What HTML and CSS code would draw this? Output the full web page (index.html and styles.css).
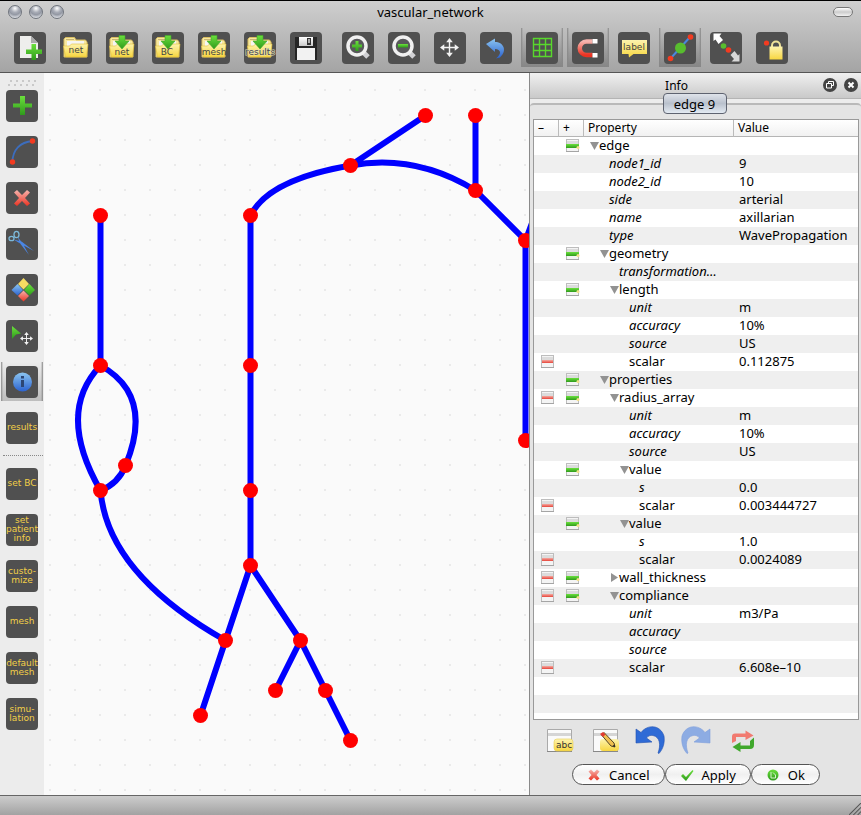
FILE: index.html
```html
<!DOCTYPE html>
<html lang="en">
<head>
<meta charset="utf-8">
<title>vascular_network</title>
<link rel="stylesheet" href="styles.css">
</head>
<body>
<svg class="defs" aria-hidden="true">
  <defs>
    <linearGradient id="green" x1="0" y1="0" x2="0" y2="1"><stop offset="0" stop-color="#6be03c"/><stop offset="1" stop-color="#2f9a1c"/></linearGradient>
    <linearGradient id="red" x1="0" y1="0" x2="0" y2="1"><stop offset="0" stop-color="#f6b4ae"/><stop offset="1" stop-color="#ea3322"/></linearGradient>
    <linearGradient id="yellow" x1="0" y1="0" x2="0" y2="1"><stop offset="0" stop-color="#fdf3ae"/><stop offset="1" stop-color="#f7d640"/></linearGradient>
    <linearGradient id="blue" x1="0" y1="0" x2="0" y2="1"><stop offset="0" stop-color="#8cc6f2"/><stop offset="1" stop-color="#2b62cf"/></linearGradient>
    <linearGradient id="silver" x1="0" y1="0" x2="0" y2="1"><stop offset="0" stop-color="#ffffff"/><stop offset="1" stop-color="#c9c9c9"/></linearGradient>
    <linearGradient id="redbar" x1="0" y1="0" x2="0" y2="1"><stop offset="0" stop-color="#f5aaa2"/><stop offset="1" stop-color="#e6453a"/></linearGradient>
    <symbol id="minus" viewBox="0 0 14 13"><rect x=".5" y=".5" width="12" height="12" fill="#f4f4f4" stroke="#bdbdbd"/><path d="M1 2h11v3H1z" fill="#dcdcdc"/><path d="M1 5h11v3H1z" fill="url(#redbar)"/><path d="M0 12.5h13" stroke="#a5a5a5"/></symbol>
    <symbol id="plus" viewBox="0 0 14 13"><rect x=".5" y=".5" width="12" height="12" fill="#f4f4f4" stroke="#bdbdbd"/><path d="M1 2h11v3H1z" fill="#dcdcdc"/><path d="M0 5h13v4H0z" fill="url(#green)"/><circle cx="12" cy="8.500" r="1.500" fill="#f4e08a"/><path d="M0 12.500h13" stroke="#a5a5a5"/></symbol>
    <symbol id="open" viewBox="0 0 9 9"><path d="M0 1h9L4.500 9z" fill="#929292"/></symbol>
    <symbol id="shut" viewBox="0 0 9 9"><path d="M1 0v9l7-4.500z" fill="#929292"/></symbol>
    <symbol id="folder" viewBox="0 0 32 32"><path d="M4 25V7l1.500-1.500h9L16 8h9.500L27 10v15z" fill="#f7e8a0" stroke="#d8bd61"/><path d="M7 9h17v7H7z" fill="#f5f5f2"/><path d="M6 7.500h8" stroke="#c9b674"/><path d="M3.500 14h6l2-2h16.500l-1.500 13H5.500z" fill="url(#yellow)" stroke="#e2bf38" stroke-width=".6"/></symbol>
    <symbol id="down" viewBox="0 0 32 32"><path d="M13 3.500h6V9h4l-7 8-7-8h4z" fill="url(#green)" stroke="#43a82b" stroke-width=".6"/></symbol>
    <symbol id="move" viewBox="0 0 20 20"><path d="M10 2v16M2 10h16" stroke="#f2f2f2" stroke-width="1.500"/><path d="M10 0l3.500 4.500h-7zM10 20l3.500-4.500h-7zM0 10l4.500-3.500v7zM20 10l-4.500-3.500v7z" fill="#f2f2f2"/></symbol>
    <pattern id="dots" width="25" height="25" patternUnits="userSpaceOnUse" x="49" y="89"><rect width="2" height="2" fill="#eaeaea"/></pattern>
  </defs>
</svg>
<div class="window">
  <header class="chrome">
    <div class="titlebar">
      <div class="lights"><button aria-label="Close"></button><button aria-label="Minimize"></button><button aria-label="Zoom"></button></div>
      <h1>vascular_network</h1>
      <button class="pill" aria-label="Toggle toolbar"></button>
    </div>
    <div class="toolbar">
      <button class="tool" aria-label="New"><svg viewBox="0 0 32 32"><path d="M6 4h11l7 7v15H6z" fill="#eeeeec"/><path d="M17 4v7h7z" fill="#aaa"/><path d="M17.500 12h4.500v5.500h6V22h-6v6h-4.500v-6H12v-4.500h5.500z" fill="url(#green)"/></svg></button>
      <button class="tool"><svg viewBox="0 0 32 32"><use href="#folder"/><text x="16" y="21">net</text></svg></button>
      <button class="tool"><svg viewBox="0 0 32 32"><use href="#folder"/><use href="#down"/><text x="16" y="23">net</text></svg></button>
      <button class="tool"><svg viewBox="0 0 32 32"><use href="#folder"/><use href="#down"/><text x="15" y="23">BC</text></svg></button>
      <button class="tool"><svg viewBox="0 0 32 32"><use href="#folder"/><use href="#down"/><text x="16" y="23">mesh</text></svg></button>
      <button class="tool"><svg viewBox="0 0 32 32"><use href="#folder"/><use href="#down"/><text class="halo" x="16" y="23">results</text></svg></button>
      <button class="tool spaced" aria-label="Save"><svg viewBox="0 0 32 32"><path d="M5 5h22v23H5z" fill="#252525"/><path d="M9 5h14v9H9z" fill="url(#silver)"/><path d="M17 6h4v7h-4z" fill="#333"/><path d="M18 7h2v4h-2z" fill="#aaa"/><path d="M7 16h18v12H7z" fill="#f2f2f2"/></svg></button>
      <button class="tool" aria-label="Zoom in"><svg viewBox="0 0 32 32"><path d="M21 20l5 5" stroke="#d0d0d3" stroke-width="5"/><circle cx="15" cy="14" r="9" fill="#58585a" stroke="#f0f0f0" stroke-width="3.500"/><path d="M13.500 9h3v3.500H20v3h-3.500V19h-3v-3.500H10v-3h3.500z" fill="url(#green)"/></svg></button>
      <button class="tool" aria-label="Zoom out"><svg viewBox="0 0 32 32"><path d="M21 20l5 5" stroke="#d0d0d3" stroke-width="5"/><circle cx="15" cy="14" r="9" fill="#58585a" stroke="#f0f0f0" stroke-width="3.500"/><path d="M10 12h10v3.500H10z" fill="url(#green)"/></svg></button>
      <button class="tool" aria-label="Pan"><svg viewBox="0 0 32 32"><use href="#move" x="6" y="6" width="19" height="19"/></svg></button>
      <button class="tool" aria-label="Undo"><svg viewBox="0 0 32 32"><path d="M6 12l9-5.500v3.500c8 0 13 8 5 15.500l-4 1c6-5 5-9-1-9.500V20z" fill="url(#blue)"/></svg></button>
      <button class="tool on" aria-label="Grid"><svg viewBox="0 0 32 32"><path d="M7.500 6.500h18v18h-18zM7.500 12.500h18M7.500 18.500h18M13.500 6.500v18M19.500 6.500v18" fill="none" stroke="#58d82c" stroke-width="1.400"/></svg></button>
      <button class="tool on" aria-label="Snap"><svg viewBox="0 0 32 32"><path d="M20.500 9.500h-6a6.500 6.500 0 0 0 0 13.500h6" fill="none" stroke="url(#red)" stroke-width="4.500"/><path d="M20.500 7h5v4.500h-5zM20.500 21h5v4.500h-5z" fill="#fff"/></svg></button>
      <button class="tool"><svg viewBox="0 0 32 32"><path d="M4 8h25v14H15.500L11 25.500 10.500 22H4z" fill="url(#yellow)"/><text x="16" y="18">label</text></svg></button>
      <button class="tool on" aria-label="Show nodes"><svg viewBox="0 0 32 32"><path d="M6.500 26.500l20-22" stroke="#4a86dd" stroke-width="2"/><circle cx="6.500" cy="26.500" r="2.800" fill="#f33b20"/><circle cx="26.500" cy="5" r="2.800" fill="#f33b20"/><circle cx="16.500" cy="16" r="5.500" fill="#58bd2e"/></svg></button>
      <button class="tool" aria-label="Stretch"><svg viewBox="0 0 32 32"><path d="M3.500 1.500h8L9.500 4l3.500 4-4.500 4L5.500 7.500l-2 1.500z" fill="#fff"/><path d="M29.500 29.500h-8l2.500-2.500-3.500-4 4-4 3.500 4.500 1.500-1.500z" fill="#d8d8d8"/><circle cx="13.500" cy="14" r="2.800" fill="#58bd2e"/><circle cx="18.500" cy="18" r="2.800" fill="#f33b20"/></svg></button>
      <button class="tool" aria-label="Lock"><svg viewBox="0 0 32 32"><circle cx="10.500" cy="11" r="2.600" fill="#f33b20"/><path d="M16 16v-2.500a4 4 0 0 1 8 0V16" fill="none" stroke="#efe39a" stroke-width="2"/><path d="M13.500 14.500h13v13h-13z" fill="url(#yellow)"/></svg></button>
    </div>
  </header>
  <main class="work">
    <nav class="side">
      <svg class="grip" viewBox="0 0 30 6"><path d="M2 1h28M0 5h30" stroke="#c9c9c9" stroke-width="2" stroke-dasharray="2 4"/></svg>
      <button class="tool" aria-label="Add"><svg viewBox="0 0 32 32"><path d="M14 6h5v7.500h7v4h-7V25h-5v-7.500H7v-4h7z" fill="url(#green)"/></svg></button>
      <button class="tool" aria-label="Curve"><svg viewBox="0 0 32 32"><path d="M6.500 26C6.500 14 14 6 26.500 5" fill="none" stroke="#3c6dbd" stroke-width="1.800"/><circle cx="6.500" cy="26" r="2.700" fill="#f33b20"/><circle cx="26.500" cy="5" r="2.700" fill="#f33b20"/></svg></button>
      <button class="tool" aria-label="Delete"><svg viewBox="0 0 32 32"><path d="M8 10.500L11 8l5 5 5-5 3 2.500-5 5.500 5 5.500-3 2.500-5-5-5 5-3-2.500 5-5.500z" fill="url(#red)"/></svg></button>
      <button class="tool" aria-label="Cut"><svg viewBox="0 0 32 32"><ellipse cx="5.500" cy="10.500" rx="2.500" ry="2.200" fill="none" stroke="#7cb8d8" stroke-width="1.300"/><ellipse cx="10.500" cy="6.500" rx="2.500" ry="3.200" fill="none" stroke="#7cb8d8" stroke-width="1.300"/><path d="M7.500 11.500l8 2 12.500 9.500-13-7zM11.500 9l5 6 6.500 12-8.500-11z" fill="#4a86e4"/></svg></button>
      <button class="tool" aria-label="Tiles"><svg viewBox="0 0 32 32"><path d="M17.500 4l5.500 6-5.500 5.500L12 10z" fill="#f6dc62"/><path d="M11.500 10l5.500 6-5.500 5.500L5.500 16z" fill="url(#blue)"/><path d="M23.500 10l5.500 6-5.500 5.500L18 16z" fill="url(#green)"/><path d="M17.500 16.500L23 22l-5.500 5.500L12 22z" fill="url(#red)"/></svg></button>
      <button class="tool" aria-label="Move"><svg viewBox="0 0 32 32"><path d="M6 6l9 7.500-5 1L6 19z" fill="url(#green)"/><use href="#move" x="14" y="12" width="13" height="13"/></svg></button>
      <button class="tool on" aria-label="Info"><svg viewBox="0 0 32 32"><circle cx="16.500" cy="16" r="9.500" fill="url(#blue)"/><path d="M15 14h3v7h-3zM15 10h3v2.500h-3z" fill="#2c4674"/></svg></button>
      <button class="tool"><span>results</span></button>
      <hr>
      <button class="tool"><span>set BC</span></button>
      <button class="tool"><span>set<br>patient<br>info</span></button>
      <button class="tool"><span>custo-<br>mize</span></button>
      <button class="tool"><span>mesh</span></button>
      <button class="tool"><span>default<br>mesh</span></button>
      <button class="tool"><span>simu-<br>lation</span></button>
    </nav>
    <section class="canvas">
      <svg width="100%" height="100%">
        <g transform="translate(-44 -73)">
          <rect x="44" y="73" width="4000" height="4000" fill="url(#dots)"/>
          <g class="edges" transform="translate(.5 .5)">
            <path d="M100 215V365Q55 412 100 490Q107 573 225 640M100 365Q154 395 125 465Q118 483 100 490"/>
            <path d="M250 565V215Q268 179 350 165L425 115M350 165Q415 153 475 190V115M475 190L525 240V440M525 240L540 200"/>
            <path d="M250 565L200 715M250 565L300 640L275 690M300 640L325 690L350 740"/>
          </g>
          <g class="nodes" transform="translate(.5 .5)">
            <circle cx="100" cy="215" r="7.500"/><circle cx="100" cy="365" r="7.500"/><circle cx="125" cy="465" r="7.500"/><circle cx="100" cy="490" r="7.500"/>
            <circle cx="250" cy="215" r="7.500"/><circle cx="250" cy="365" r="7.500"/><circle cx="250" cy="490" r="7.500"/><circle cx="250" cy="565" r="7.500"/>
            <circle cx="350" cy="165" r="7.500"/><circle cx="425" cy="115" r="7.500"/><circle cx="475" cy="115" r="7.500"/><circle cx="475" cy="190" r="7.500"/>
            <circle cx="525" cy="240" r="7.500"/><circle cx="525" cy="440" r="7.500"/><circle cx="225" cy="640" r="7.500"/><circle cx="200" cy="715" r="7.500"/>
            <circle cx="300" cy="640" r="7.500"/><circle cx="275" cy="690" r="7.500"/><circle cx="325" cy="690" r="7.500"/><circle cx="350" cy="740" r="7.500"/>
          </g>
        </g>
      </svg>
    </section>
    <aside class="dock">
      <div class="dock-title">
        <h2>Info</h2>
        <div class="dock-buttons">
          <button aria-label="Float"><svg viewBox="0 0 14 14"><circle cx="7" cy="7" r="7" fill="#444"/><path d="M5.500 5.500v-2h5v4h-2M3.500 5.500h5v4.500h-5z" fill="none" stroke="#fff"/></svg></button>
          <button aria-label="Close"><svg viewBox="0 0 14 14"><circle cx="7" cy="7" r="7" fill="#444"/><path d="M4.500 4.500l5 5M9.500 4.500l-5 5" stroke="#fff" stroke-width="2"/></svg></button>
        </div>
      </div>
      <div class="tabs"><button class="tab">edge 9</button></div>
      <div class="panel">
        <div class="tree">
          <table>
            <colgroup><col class="c-minus"><col class="c-plus"><col class="c-name"><col></colgroup>
            <thead><tr><th>–</th><th>+</th><th>Property</th><th>Value</th></tr></thead>
            <tbody>
              <tr><td></td><td><svg class="mark"><use href="#plus"/></svg></td><td class="l0"><svg class="tri"><use href="#open"/></svg>edge</td><td></td></tr>
              <tr><td></td><td></td><td class="l1 attr">node1_id</td><td>9</td></tr>
              <tr><td></td><td></td><td class="l1 attr">node2_id</td><td>10</td></tr>
              <tr><td></td><td></td><td class="l1 attr">side</td><td>arterial</td></tr>
              <tr><td></td><td></td><td class="l1 attr">name</td><td>axillarian</td></tr>
              <tr><td></td><td></td><td class="l1 attr">type</td><td>WavePropagation</td></tr>
              <tr><td></td><td><svg class="mark"><use href="#plus"/></svg></td><td class="l1"><svg class="tri"><use href="#open"/></svg>geometry</td><td></td></tr>
              <tr><td></td><td></td><td class="l2 attr">transformation…</td><td></td></tr>
              <tr><td></td><td><svg class="mark"><use href="#plus"/></svg></td><td class="l2"><svg class="tri"><use href="#open"/></svg>length</td><td></td></tr>
              <tr><td></td><td></td><td class="l3 attr">unit</td><td>m</td></tr>
              <tr><td></td><td></td><td class="l3 attr">accuracy</td><td>10%</td></tr>
              <tr><td></td><td></td><td class="l3 attr">source</td><td>US</td></tr>
              <tr><td><svg class="mark"><use href="#minus"/></svg></td><td></td><td class="l3">scalar</td><td>0.112875</td></tr>
              <tr><td></td><td><svg class="mark"><use href="#plus"/></svg></td><td class="l1"><svg class="tri"><use href="#open"/></svg>properties</td><td></td></tr>
              <tr><td><svg class="mark"><use href="#minus"/></svg></td><td><svg class="mark"><use href="#plus"/></svg></td><td class="l2"><svg class="tri"><use href="#open"/></svg>radius_array</td><td></td></tr>
              <tr><td></td><td></td><td class="l3 attr">unit</td><td>m</td></tr>
              <tr><td></td><td></td><td class="l3 attr">accuracy</td><td>10%</td></tr>
              <tr><td></td><td></td><td class="l3 attr">source</td><td>US</td></tr>
              <tr><td></td><td><svg class="mark"><use href="#plus"/></svg></td><td class="l3"><svg class="tri"><use href="#open"/></svg>value</td><td></td></tr>
              <tr><td></td><td></td><td class="l4 attr">s</td><td>0.0</td></tr>
              <tr><td><svg class="mark"><use href="#minus"/></svg></td><td></td><td class="l4">scalar</td><td>0.003444727</td></tr>
              <tr><td></td><td><svg class="mark"><use href="#plus"/></svg></td><td class="l3"><svg class="tri"><use href="#open"/></svg>value</td><td></td></tr>
              <tr><td></td><td></td><td class="l4 attr">s</td><td>1.0</td></tr>
              <tr><td><svg class="mark"><use href="#minus"/></svg></td><td></td><td class="l4">scalar</td><td>0.0024089</td></tr>
              <tr><td><svg class="mark"><use href="#minus"/></svg></td><td><svg class="mark"><use href="#plus"/></svg></td><td class="l2"><svg class="tri"><use href="#shut"/></svg>wall_thickness</td><td></td></tr>
              <tr><td><svg class="mark"><use href="#minus"/></svg></td><td><svg class="mark"><use href="#plus"/></svg></td><td class="l2"><svg class="tri"><use href="#open"/></svg>compliance</td><td></td></tr>
              <tr><td></td><td></td><td class="l3 attr">unit</td><td>m3/Pa</td></tr>
              <tr><td></td><td></td><td class="l3 attr">accuracy</td><td></td></tr>
              <tr><td></td><td></td><td class="l3 attr">source</td><td></td></tr>
              <tr><td><svg class="mark"><use href="#minus"/></svg></td><td></td><td class="l3">scalar</td><td>6.608e–10</td></tr>
            </tbody>
          </table>
        </div>
        <div class="actions">
          <button><svg viewBox="0 0 30 30"><path d="M2.500 4.500h24v22h-24z" fill="#fafafa" stroke="#aaa"/><path d="M3 8h23v3H3z" fill="#d5d5d5"/><path d="M2 26.500h25" stroke="#888"/><rect x="9" y="14" width="19" height="12" rx="3" fill="url(#yellow)" stroke="#e8cf55" stroke-width=".6"/><text class="abc" x="19" y="23">abc</text></svg></button>
          <button aria-label="Edit"><svg viewBox="0 0 30 30"><path d="M2.500 4.500h24v22h-24z" fill="#fafafa" stroke="#aaa"/><path d="M3 8h23v3H3z" fill="#d5d5d5"/><path d="M2 26.500h25" stroke="#888"/><rect x="9" y="14" width="19" height="12" rx="3" fill="url(#yellow)"/><path d="M10.500 10l2.500-2.500L23 18l1 4-4-1z" fill="#f0c050" stroke="#554627"/><path d="M9 9l3-2 2.500 2.500-2.500 2.500z" fill="#e23a32"/><path d="M21.500 21l2.500 1-.500-2.500z" fill="#222"/></svg></button>
          <button aria-label="Undo"><svg viewBox="2 0 30 30"><path d="M1 4l5 3.500C12-.500 25-1 29 11c1 7-1 13-5 17.500l-1-.5c3-8 2-16-5-17.500-3-.5-5 .5-6.500 2.500L17 17l-16 1z" fill="#2f6bd6" stroke="#1f4fb0" stroke-width=".6"/></svg></button>
          <button aria-label="Redo"><svg viewBox="2 0 30 30"><path d="M29 4l-5 3.500C18-.500 5-1 1 11c-1 7 1 13 5 17.500l1-.5c-3-8-2-16 5-17.500 3-.5 5 .5 6.500 2.500L13 17l16 1z" fill="#8dace3" stroke="#7d9edb" stroke-width=".6"/></svg></button>
          <button aria-label="Refresh"><svg viewBox="1 0 30 30"><path d="M4 18V11.500Q4 8.500 7 8.500h10.500V5.500L25.500 10.500l-8 4.500v-3H8v4z" fill="#f17a70"/><path d="M26 12.500V20q0 4-4 4h-9.500v3L4.500 22l8-5v3.500H22V16z" fill="#40a82c"/></svg></button>
        </div>
        <div class="dialog">
          <button><svg viewBox="0 0 14 14"><path d="M1.500 3.500L4 1.500l3 3 3-3 2.500 2-3 3.500 3 3.500-2.500 2-3-3-3 3-2.500-2 3-3.500z" fill="url(#red)"/></svg>Cancel</button>
          <button><svg viewBox="0 0 14 14"><path d="M1 8l2-2 3 3 6.500-7L13.500 3 6 13z" fill="url(#green)"/></svg>Apply</button>
          <button><svg viewBox="0 0 14 14"><circle cx="7" cy="7" r="5.500" fill="url(#green)"/><path d="M5 4v6h4.500V7L7 4.500" fill="none" stroke="#d8f0cf"/></svg>Ok</button>
        </div>
      </div>
    </aside>
  </main>
  <footer class="status"><svg viewBox="0 0 14 14"><path d="M0 14L14 0M5 14L14 5M10 14L14 10" stroke="#555" stroke-width="1.200"/></svg></footer>
</div>
</body>
</html>
```
FILE: styles.css
```css
* { box-sizing: border-box; }
body { margin: 0; font: 13px/18px "Noto Sans", "Open Sans", sans-serif; color: #000; }
button { font: inherit; color: inherit; padding: 0; border: 0; background: none; }
h1, h2 { margin: 0; font-size: 13px; font-weight: 400; }
.defs { position: absolute; width: 0; height: 0; }

.window { display: flex; flex-direction: column; height: 100vh; overflow: hidden; border-top: 1px solid #000; background: #ececec; }
.chrome { flex: none; border-bottom: 1px solid #555; background: linear-gradient(#cfcfcf, #a4a4a4); }
.titlebar { display: flex; align-items: center; justify-content: space-between; height: 22px; padding: 0 8px; }
.titlebar h1 { flex: 1; text-align: center; padding-right: 36px; }
.lights { display: flex; gap: 7px; }
.lights button { width: 14px; height: 14px; border: 1px solid #70757d; border-radius: 50%; background: radial-gradient(circle at 50% 20%, #fff 0, #a9adb7 35%, #9398a3 55%, #eceef2 90%); }
.pill { width: 20px; height: 10px; border: 1px solid #777; border-radius: 5px; background: linear-gradient(#fff, #ccc 50%, #f2f2f2); }
.toolbar { display: flex; gap: 4px; padding: 5px 9px; }

.tool { flex: none; display: flex; align-items: center; justify-content: center; width: 42px; height: 39px; }
.tool > svg, .tool > span { width: 32px; height: 32px; border-radius: 4px; background: #505050; }
.tool > svg { display: block; overflow: visible; }
.tool.on { background: linear-gradient(90deg, #888, transparent 5%, transparent 95%, #888), linear-gradient(rgba(0, 0, 0, 0), rgba(0, 0, 0, 0.2)); }
.tool text { font: 9px "DejaVu Sans", sans-serif; text-anchor: middle; fill: #444; }
.tool .halo { paint-order: stroke; stroke: #e6dfba; stroke-width: 1px; }
.spaced { margin-right: 6px; }

.work { flex: 1; display: flex; min-height: 0; }
.side { flex: none; width: 44px; padding: 7px 1px 0; display: flex; flex-direction: column; gap: 7px; }
.grip { flex: none; width: 30px; height: 6px; margin: 0 6px -7px 7px; }
.side span { display: flex; align-items: center; justify-content: center; font: 9px/9px "DejaVu Sans", sans-serif; color: #f2cf48; }
.side hr { width: 40px; margin: 1px 0 1px 2px; border: 0; border-top: 1px dotted #888; }
.canvas { flex: 1; min-width: 0; background: #fafafa; overflow: hidden; }
.canvas svg { display: block; }
.edges { fill: none; stroke: #00f; stroke-width: 6; }
.nodes { fill: #f00; }

.dock { flex: none; width: 332px; display: flex; flex-direction: column; border-left: 1px solid #8a8a8a; background: #ececec; }
.dock-title { flex: none; display: flex; height: 26px; padding: 5px 3px 0 0; border-bottom: 1px solid #b4b4b4; background: linear-gradient(#f0f0f0, #c9c9c9); }
.dock-title h2 { flex: 1; text-align: center; font-size: 12px; line-height: 16px; }
.dock-buttons { display: flex; gap: 7px; }
.dock-buttons button, .dock-buttons svg { display: block; width: 14px; height: 14px; }
.tabs { position: relative; display: flex; justify-content: center; margin-top: -6px; padding-right: 2px; }
.tab { width: 64px; height: 21px; border: 1px solid #5e6370; border-radius: 4px; line-height: 18px; background: linear-gradient(#dfe3ea, #b9c1cd 50%, #e3eaf2); }
.panel { flex: 1; min-height: 0; display: flex; flex-direction: column; margin-top: -11px; padding: 14px 2px 10px 3px; border-top: 2px solid #b9b9b9; border-radius: 4px 4px 0 0; background: #e4e4e4; }
.tree { flex: 1; min-height: 0; overflow: hidden; border: 1px solid #999; background: repeating-linear-gradient(#fff 0 18px, #efefef 18px 36px); background-position: 0 17px; }
table { width: 100%; table-layout: fixed; border-collapse: separate; border-spacing: 0; }
th, td { height: 18px; padding: 0; line-height: 16px; text-align: left; vertical-align: top; font-weight: 400; white-space: nowrap; }
th { height: 17px; padding-left: 4px; font-size: 12px; border-right: 1px solid #bbb; border-bottom: 1px solid #b5b5b5; background: linear-gradient(#fff, #f1f1f1); }
th:last-child { border-right: 0; }
td:last-child { padding-left: 5px; }
.c-minus, .c-plus { width: 25px; }
.c-name { width: 150px; }
.mark { display: block; width: 14px; height: 13px; margin: 2px 0 0 7px; }
.tri { width: 9px; height: 9px; margin-left: -9px; }
.l0 { padding-left: 15px; }
.l1 { padding-left: 25px; }
.l2 { padding-left: 35px; }
.l3 { padding-left: 45px; }
.l4 { padding-left: 55px; }
.attr { font-style: italic; }

.actions { flex: none; display: flex; gap: 16px; padding: 5px 0 0 12px; }
.actions button, .actions svg { display: block; width: 30px; height: 30px; }
.actions svg { overflow: visible; }
.abc { font: 9px "DejaVu Sans", sans-serif; text-anchor: middle; fill: #333; }
.dialog { flex: none; display: flex; justify-content: center; padding-top: 9px; }
.dialog button { display: flex; align-items: center; gap: 8px; height: 21px; padding: 0 14px; border: 1px solid #555; border-radius: 11px; background: linear-gradient(#fff, #f0f0f0 50%, #fff); }
.dialog svg { width: 14px; height: 14px; }
.status { flex: none; display: flex; align-items: flex-end; justify-content: flex-end; height: 20px; border-top: 1px solid #666; background: linear-gradient(#cdcdcd, #a2a2a2); }
.status svg { width: 12px; height: 12px; }
```
